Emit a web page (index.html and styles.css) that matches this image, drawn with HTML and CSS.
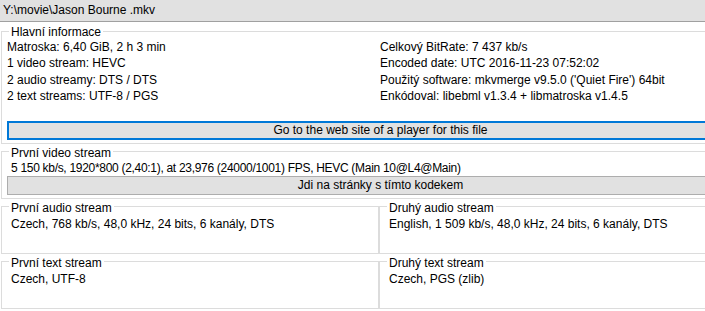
FILE: index.html
```html
<!DOCTYPE html>
<html>
<head>
    <title>MediaInfo - Jason Bourne .mkv</title>
    <link rel="stylesheet" href="styles.css">
</head>
<body>
    <div class="window">
        <div class="file-bar">Y:\movie\Jason Bourne .mkv</div>

        <fieldset class="group general">
            <legend>Hlavní informace</legend>
            <div class="info-cols">
                <div class="info-col">
                    <div class="line">Matroska: 6,40 GiB, 2 h 3 min</div>
                    <div class="line">1 video stream: HEVC</div>
                    <div class="line">2 audio streamy: DTS / DTS</div>
                    <div class="line">2 text streams: UTF-8 / PGS</div>
                </div>
                <div class="info-col">
                    <div class="line">Celkový BitRate: 7 437 kb/s</div>
                    <div class="line">Encoded date: UTC 2016-11-23 07:52:02</div>
                    <div class="line">Použitý software: mkvmerge v9.5.0 ('Quiet Fire') 64bit</div>
                    <div class="line">Enkódoval: libebml v1.3.4 + libmatroska v1.4.5</div>
                </div>
            </div>
            <button class="button default">Go to the web site of a player for this file</button>
        </fieldset>

        <fieldset class="group stream video">
            <legend>První video stream</legend>
            <div class="line text">5 150 kb/s, 1920*800 (2,40:1), at 23,976 (24000/1001) FPS, HEVC (Main 10@L4@Main)</div>
            <button class="button">Jdi na stránky s tímto kodekem</button>
        </fieldset>

        <div class="pair">
            <fieldset class="group stream half">
                <legend>První audio stream</legend>
                <div class="line text">Czech, 768 kb/s, 48,0 kHz, 24 bits, 6 kanály, DTS</div>
            </fieldset>
            <fieldset class="group stream half">
                <legend>Druhý audio stream</legend>
                <div class="line text">English, 1 509 kb/s, 48,0 kHz, 24 bits, 6 kanály, DTS</div>
            </fieldset>
        </div>

        <div class="pair">
            <fieldset class="group stream half">
                <legend>První text stream</legend>
                <div class="line text">Czech, UTF-8</div>
            </fieldset>
            <fieldset class="group stream half">
                <legend>Druhý text stream</legend>
                <div class="line text">Czech, PGS (zlib)</div>
            </fieldset>
        </div>
    </div>
</body>
</html>
```

FILE: styles.css
```css
body {
    margin: 0;
    background: #fff;
    color: #000;
    font-family: "Liberation Sans", Arial, sans-serif;
    font-size: 12px;
    overflow: hidden;
}
.window {
    width: 760px;
}
.file-bar {
    height: 21px;
    line-height: 21px;
    padding-left: 3px;
    background: #e1e1e1;
    border-bottom: 1px solid #a0a0a0;
    margin-bottom: 1px;
}
.group {
    margin: 0 0 0 1px;
    padding: 0 5px 3px 5px;
    border: 1px solid #dcdcdc;
    min-width: 0;
}
.group legend {
    margin-left: 2px;
    padding: 2px 2px 0;
    line-height: 14px;
}
.info-cols {
    display: grid;
    grid-template-columns: 373px 1fr;
}
.line {
    line-height: 16.4px;
    white-space: nowrap;
}
.button {
    display: block;
    width: 100%;
    height: 19px;
    padding: 0;
    background: #e1e1e1;
    border: 1px solid #adadad;
    font-family: "Liberation Sans", Arial, sans-serif;
    font-size: 12px;
    color: #000;
}
.button.default {
    border: 2px solid #0078d7;
    margin-top: 16px;
}
.stream .text {
    line-height: 16px;
    padding: 1px 0 0 4px;
}
.video {
    padding-bottom: 3px;
}
.video .text {
    line-height: 15px;
    letter-spacing: -0.3px;
}
.pair {
    display: flex;
    padding-left: 1px;
}
.half {
    width: 378px;
    margin: 0;
    padding-bottom: 21px;
    box-sizing: border-box;
}
```
